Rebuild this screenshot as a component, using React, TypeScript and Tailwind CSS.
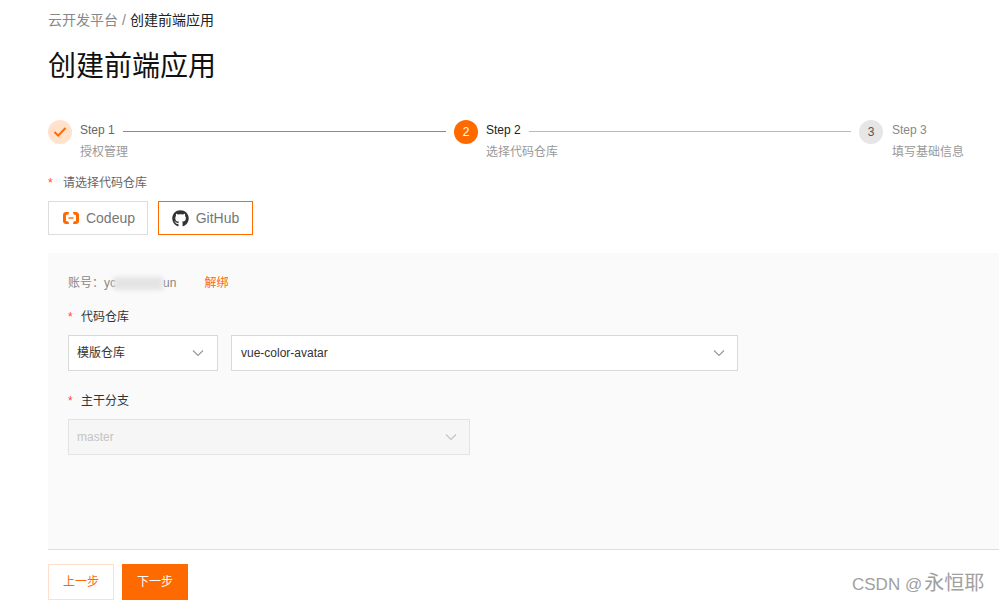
import React from 'react';
import { FaGithub } from 'react-icons/fa';

const Chevron = ({ color = '#999999' }: { color?: string }) => (
	<svg width="12" height="8" viewBox="0 0 12 8" fill="none" stroke={color} strokeWidth="1.2">
		<path d="M1 1.5 L6 6.5 L11 1.5" />
	</svg>
);

const Codeup = () => (
	<svg width="16" height="12" viewBox="0 0 16 12" fill="#ff6a00">
		<path d="M6 0H3C1.3 0 0 1.3 0 3v6c0 1.7 1.3 3 3 3h3l-.6-2.5-2.4-.5V3l2.4-.5zM10 0h3c1.7 0 3 1.3 3 3v6c0 1.7-1.3 3-3 3h-3l.6-2.5 2.4-.5V3l-2.4-.5z" />
		<path d="M5.5 5.3h5v1.4h-5z" />
	</svg>
);

const Step = ({
	mark,
	title,
	desc,
	circle,
	titleColor,
	line,
	className,
	gap = 'ml-2',
}: {
	mark: React.ReactNode;
	title: string;
	desc: string;
	circle: string;
	titleColor: string;
	line?: string;
	className: string;
	gap?: string;
}) => (
	<div className={`flex ${className}`}>
		<div className={`flex h-6 w-6 shrink-0 items-center justify-center rounded-full text-xs ${circle}`}>{mark}</div>
		<div className={`flex-1 ${gap}`}>
			<div className="flex h-5 items-center">
				<span className={`text-xs ${titleColor}`}>{title}</span>
				{line && <div className={`mx-2 mt-[2px] h-px flex-1 ${line}`} />}
			</div>
			<div className="mt-[2px] text-xs leading-5 text-[#999999]">{desc}</div>
		</div>
	</div>
);

const Label = ({ text }: { text: string }) => (
	<div className="flex h-5 items-center text-xs text-[#333333]">
		<span className="w-[13px] text-[#ff4d2e]">*</span>
		{text}
	</div>
);

const App = () => {
	return (
		<div
			className="relative h-[603px] overflow-hidden bg-white pl-12"
			style={{ fontFamily: '"Liberation Sans", "Noto Sans CJK SC", sans-serif' }}
		>
			{/* breadcrumb */}
			<div className="mt-[10px] flex h-5 items-center text-[14px] text-[#888888]">
				云开发平台<span className="mx-1">/</span>
				<span className="text-[#222222]">创建前端应用</span>
			</div>
			<h1 className="mt-[17px] text-[28px] leading-10 font-normal text-[#111111]">创建前端应用</h1>

			{/* steps */}
			<div className="mt-[33px] flex">
				<Step
					className="w-[406px]"
					circle="bg-[#ffe1cc]"
					mark={
						<svg width="14" height="12" viewBox="0 0 14 12" fill="none" stroke="#ff6a00" strokeWidth="2">
							<path d="M1.5 6 L5.2 9.6 L12.5 2" />
						</svg>
					}
					title="Step 1"
					titleColor="text-[#666666]"
					desc="授权管理"
					line="bg-[#ff6a00]"
				/>
				<Step
					className="w-[405px]"
					circle="bg-[#ff6a00] text-white"
					mark="2"
					title="Step 2"
					titleColor="text-[#222222]"
					desc="选择代码仓库"
					line="bg-[#bbbbbb]"
				/>
				<Step
					className="flex-1"
					gap="ml-[9px]"
					circle="bg-[#e6e6e6] text-[#555555]"
					mark="3"
					title="Step 3"
					titleColor="text-[#888888]"
					desc="填写基础信息"
				/>
			</div>

			{/* repo source */}
			<div className="mt-[11px] flex h-5 items-center text-xs text-[#666666]">
				<span className="w-[15px] text-[#ff4d2e]">*</span>
				请选择代码仓库
			</div>
			<div className="mt-2 flex gap-[10px]">
				<button className="flex h-[34px] w-[100px] items-center justify-center gap-[7px] border border-[#dddddd] pl-[2px] text-[14px] text-[#777777]">
					<Codeup />
					Codeup
				</button>
				<button className="flex h-[34px] w-[95px] items-center justify-center gap-[7px] border border-[#ff6a00] text-[14px] text-[#777777]">
					<FaGithub className="text-[17px] text-[#333333]" />
					GitHub
				</button>
			</div>

			{/* form panel */}
			<div className="mt-[18px] h-[296px] bg-[#fafafa] px-5 pt-5">
				<div className="flex h-5 items-center text-xs text-[#888888]">
					账号：yc
					<span className="h-[13px] w-[49px] -translate-x-[2px] bg-[#e4e4e4] blur-[2px]" />
					<span className="-ml-[2px]">un</span>
					<span className="ml-[28px] text-[#ff6a00]">解绑</span>
				</div>
				<div className="mt-[14px]">
					<Label text="代码仓库" />
				</div>
				<div className="mt-2 flex gap-[13px]">
					<div className="flex h-9 w-[150px] items-center justify-between border border-[#d9d9d9] bg-white pr-[13px] pl-2 text-xs text-[#333333]">
						模版仓库
						<Chevron />
					</div>
					<div className="flex h-9 w-[507px] items-center justify-between border border-[#d9d9d9] bg-white pr-[12px] pl-[9px] text-xs text-[#333333]">
						vue-color-avatar
						<Chevron />
					</div>
				</div>
				<div className="mt-5">
					<Label text="主干分支" />
				</div>
				<div className="mt-2 flex h-9 w-[402px] items-center justify-between border border-[#e3e3e3] bg-[#f6f6f6] pr-[12px] pl-2 text-xs text-[#c4c4c4]">
					master
					<Chevron color="#c4c4c4" />
				</div>
			</div>

			{/* footer */}
			<div className="flex gap-2 border-t border-[#dddddd] pt-[14px]">
				<button className="h-9 w-[66px] border border-[#ffdfc9] bg-white text-xs text-[#ff6a00]">上一步</button>
				<button className="h-9 w-[66px] bg-[#ff6a00] text-xs text-white">下一步</button>
			</div>

			{/* watermark */}
			<div className="absolute top-[571px] left-[852px] text-[17px] leading-6 whitespace-nowrap text-[#a0a0a0]">
				CSDN @<span className="ml-[2px] text-[20px]">永恒耶</span>
			</div>
		</div>
	);
};

export default App;
